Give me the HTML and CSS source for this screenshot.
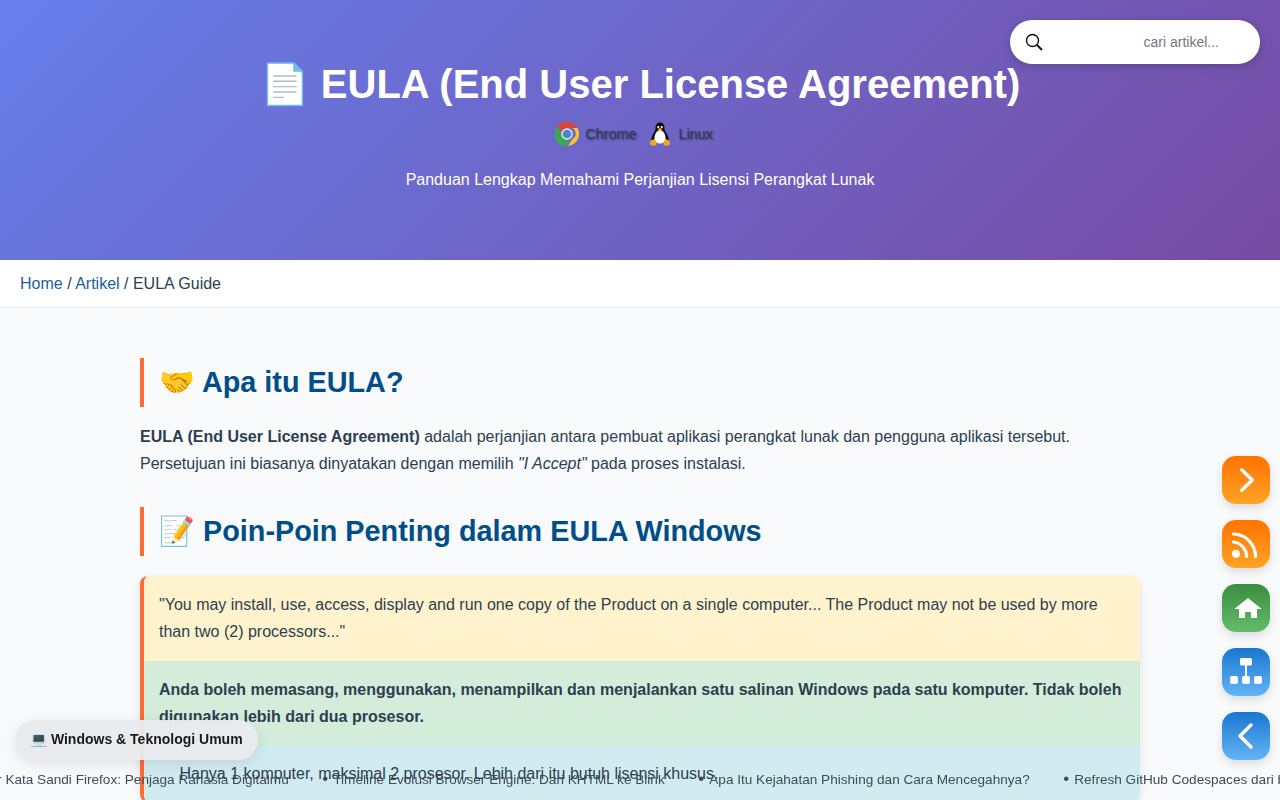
FILE: index.html
```html
<!DOCTYPE html>
<html lang="id">
<head>
    <meta charset="UTF-8">
    <meta name="viewport" content="width=device-width, initial-scale=1.0">
    <title>EULA (End User License Agreement)</title>
    <link rel="stylesheet" href="styles.css">
</head>
<body>
    <header class="hero">
        <h1>📄 EULA (End User License Agreement)</h1>
        <div class="platforms">
            <span class="platform">
                <svg class="platform-icon" viewBox="2 2 44 44">
                    <path d="M24 2a22 22 0 0 1 19.05 11H24a11 11 0 0 0-10.4 7.4L6.200 9.600A22 22 0 0 1 24 2z" fill="#db4437"/>
                    <path d="M43.05 13A22 22 0 0 1 25.500 45.950L34 33a11 11 0 0 0-1-20z" fill="#fbc02d"/>
                    <path d="M6.200 9.600l9.400 16.200A11 11 0 0 0 28 34.600l-2.500 11.350A22 22 0 0 1 6.200 9.600z" fill="#3aa757"/>
                    <circle cx="24" cy="24" r="10.500" fill="#e8e8e8"/>
                    <circle cx="24" cy="24" r="8" fill="#4a86c8"/>
                </svg>
                Chrome
            </span>
            <span class="platform">
                <svg class="platform-icon" viewBox="0 0 44 48">
                    <path d="M22 1c-6 0-9 4-9 10 0 5-1 7-4 12-3 4-5 9-4 14l5 5h24l5-5c1-5-1-10-4-14-3-5-4-7-4-12 0-6-3-10-9-10z" fill="#111"/>
                    <path d="M22 16c-7 1-12 10-11 19 1 5 5 8 11 8s10-3 11-8c1-9-4-18-11-19z" fill="#fff"/>
                    <circle cx="18.500" cy="10" r="2.200" fill="#fff"/>
                    <circle cx="25.500" cy="10" r="2.200" fill="#fff"/>
                    <path d="M17 14l5-2 5 2-5 4z" fill="#f5a81c"/>
                    <path d="M4 37l7-3 4 8c1 3-1 5-4 5-3 1-7 0-9-2-1-2 1-5 2-8zM40 37l-7-3-4 8c-1 3 1 5 4 5 3 1 7 0 9-2 1-2-1-5-2-8z" fill="#f5a81c"/>
                </svg>
                Linux
            </span>
        </div>
        <p class="subtitle">Panduan Lengkap Memahami Perjanjian Lisensi Perangkat Lunak</p>
        <form class="search">
            <svg class="search-icon" viewBox="0 0 18 18">
                <circle cx="7.500" cy="7.500" r="6" fill="none" stroke="#111" stroke-width="1.400"/>
                <path d="M12 12l5 5" stroke="#111" stroke-width="2"/>
            </svg>
            <input class="search-input" type="text" placeholder="cari artikel...">
        </form>
    </header>

    <nav class="breadcrumb">
        <a href="#">Home</a> / <a href="#">Artikel</a> / EULA Guide
    </nav>

    <main class="content">
        <h2>🤝 Apa itu EULA?</h2>
        <p><strong>EULA (End User License Agreement)</strong> adalah perjanjian antara pembuat aplikasi perangkat lunak dan pengguna aplikasi tersebut. Persetujuan ini biasanya dinyatakan dengan memilih <em>"I Accept"</em> pada proses instalasi.</p>

        <h2>📝 Poin-Poin Penting dalam EULA Windows</h2>
        <div class="clause">
            <div class="clause-quote">"You may install, use, access, display and run one copy of the Product on a single computer... The Product may not be used by more than two (2) processors..."</div>
            <div class="clause-meaning">Anda boleh memasang, menggunakan, menampilkan dan menjalankan satu salinan Windows pada satu komputer. Tidak boleh digunakan lebih dari dua prosesor.</div>
            <ul class="clause-summary">
                <li>Hanya 1 komputer, maksimal 2 prosesor. Lebih dari itu butuh lisensi khusus.</li>
            </ul>
        </div>
    </main>

    <div class="category-pill">💻 Windows &amp; Teknologi Umum</div>

    <div class="ticker">
        <div class="ticker-track">
            <a href="#">Manager Kata Sandi Firefox: Penjaga Rahasia Digitalmu</a>
            <a href="#">Timeline Evolusi Browser Engine: Dari KHTML ke Blink</a>
            <a href="#">Apa Itu Kejahatan Phishing dan Cara Mencegahnya?</a>
            <a href="#">Refresh GitHub Codespaces dari browser</a>
        </div>
    </div>

    <div class="side-nav">
        <a class="side-btn orange" href="#">
            <svg viewBox="0 0 30 30"><path d="M10.700 4.700L21.300 15 10.700 25.300" fill="none" stroke="#fff" stroke-width="3.400" stroke-linecap="round" stroke-linejoin="round"/></svg>
        </a>
        <a class="side-btn orange" href="#">
            <svg viewBox="0 0 30 30"><circle cx="5" cy="24.700" r="4" fill="#fff"/><path d="M2.500 13A14.500 14.500 0 0 1 15.500 27.500M2.500 5A22.500 22.500 0 0 1 24.500 27.500" fill="none" stroke="#fff" stroke-width="3.200" stroke-linecap="round"/></svg>
        </a>
        <a class="side-btn green" href="#">
            <svg viewBox="0 0 30 30"><path d="M17 5L3.300 16H8v9h6v-6h6v6h6v-9h4.700z" fill="#fff"/></svg>
        </a>
        <a class="side-btn blue" href="#">
            <svg viewBox="0 0 30 30"><rect x="9" y="1" width="12" height="7.500" rx="1.500" fill="#fff"/><rect x="14" y="8" width="2" height="11" fill="#fff"/><rect x="-1" y="19" width="8" height="8" rx="2" fill="#fff"/><rect x="11" y="19" width="8" height="8" rx="2" fill="#fff"/><rect x="23" y="19" width="8" height="8" rx="2" fill="#fff"/></svg>
        </a>
        <a class="side-btn blue" href="#">
            <svg viewBox="0 0 30 30"><path d="M20 4L9 15l11 11" fill="none" stroke="#fff" stroke-width="3.400" stroke-linecap="round" stroke-linejoin="round"/></svg>
        </a>
    </div>
</body>
</html>
```

FILE: styles.css
```css
/* General styles */
* {
    box-sizing: border-box;
}

body {
    font-family: "Liberation Sans", Arial, sans-serif;
    margin: 0;
    line-height: 1.7;
    color: #2c3e50;
    background-color: #f8fafc;
    overflow-x: hidden;
}

a {
    color: #1a5f9c;
    text-decoration: none;
}

/* Header */
.hero {
    position: relative;
    height: 260px;
    padding-top: 50px;
    text-align: center;
    color: #fff;
    background: linear-gradient(135deg, #667eea 0%, #764ba2 100%);
}

.hero h1 {
    margin: 0;
    font-size: 40px;
}

.platforms {
    display: flex;
    justify-content: center;
    height: 32px;
    align-items: center;
    color: #2c3e50;
    font-size: 14.4px;
    text-shadow: 1px 1px 2px rgba(0, 0, 0, 0.5);
}

.platform {
    display: flex;
    align-items: center;
    gap: 6px;
    margin-right: 12px;
}

.platform-icon {
    width: 24px;
    height: 24px;
}

.subtitle {
    margin: 16px 0 0;
    font-size: 16px;
}

/* Search box */
.search {
    position: absolute;
    top: 20px;
    right: 20px;
    display: flex;
    align-items: center;
    width: 250px;
    height: 44px;
    padding: 0 15px;
    background: #fff;
    border-radius: 22px;
    box-shadow: 0 2px 10px rgba(0, 0, 0, 0.2);
}

.search-icon {
    width: 18px;
    height: 18px;
    flex: none;
}

.search-input {
    flex: 1;
    min-width: 0;
    border: none;
    outline: none;
    padding: 0 26px 0 0;
    font: 14px "Liberation Sans", Arial, sans-serif;
    text-align: right;
    background: transparent;
}

.search-input::placeholder {
    color: #777;
}

/* Breadcrumb */
.breadcrumb {
    height: 48px;
    padding: 10px 20px;
    background: #fff;
    border-bottom: 1px solid #e9ecef;
    font-size: 16px;
}

/* Article */
.content {
    max-width: 1000px;
    margin: 0 auto;
    padding-top: 50px;
    font-size: 16px;
}

.content h2 {
    margin: 0 0 16px;
    padding-left: 15px;
    border-left: 4px solid #ff6b35;
    font-size: 28.8px;
    color: #004e89;
}

.content p {
    margin: 0 0 30px;
}

/* Clause box */
.clause {
    margin-top: 20px;
    border-left: 4px solid #ff6b35;
    border-radius: 8px;
    overflow: hidden;
    box-shadow: 0 2px 8px rgba(0, 0, 0, 0.1);
}

.clause-quote,
.clause-meaning {
    padding: 15px;
}

.clause-quote {
    background: #fff3cd;
}

.clause-meaning {
    background: #d4edda;
    font-weight: bold;
}

.clause-summary {
    margin: 0;
    padding: 15px 15px 15px 35.5px;
    list-style: none;
    background: #d1ecf1;
}

/* Floating category label */
.category-pill {
    position: fixed;
    left: 15px;
    bottom: 40px;
    height: 40px;
    padding: 0 15px;
    display: flex;
    align-items: center;
    font-size: 14px;
    font-weight: bold;
    color: #1a1a1a;
    background: rgba(233, 234, 238, 0.97);
    border-radius: 20px;
    box-shadow: 0 4px 15px rgba(0, 0, 0, 0.1);
}

/* Running headlines */
.ticker {
    position: fixed;
    left: 0;
    right: 0;
    bottom: 10px;
    height: 22px;
    overflow: hidden;
    white-space: nowrap;
    font-size: 13.6px;
}

.ticker-track {
    display: flex;
    gap: 33.6px;
    transform: translateX(-63px);
}

.ticker-track a {
    color: #3f4b57;
}

.ticker-track a::before {
    content: "•";
    margin-right: 5px;
    font-size: 17px;
    line-height: 1;
}

/* Side buttons */
.side-nav {
    position: fixed;
    right: 10px;
    top: 456px;
    display: flex;
    flex-direction: column;
    gap: 16px;
}

.side-btn {
    display: flex;
    align-items: center;
    justify-content: center;
    width: 48px;
    height: 48px;
    border-radius: 14px;
    box-shadow: 0 4px 10px rgba(0, 0, 0, 0.12);
}

.side-btn svg {
    width: 30px;
    height: 30px;
    overflow: visible;
}

.orange {
    background: linear-gradient(180deg, #ff7300, #ffa326);
}

.green {
    background: linear-gradient(180deg, #388e3c, #66bb6a);
}

.blue {
    background: linear-gradient(180deg, #1976d2, #64b5f6);
}
```
